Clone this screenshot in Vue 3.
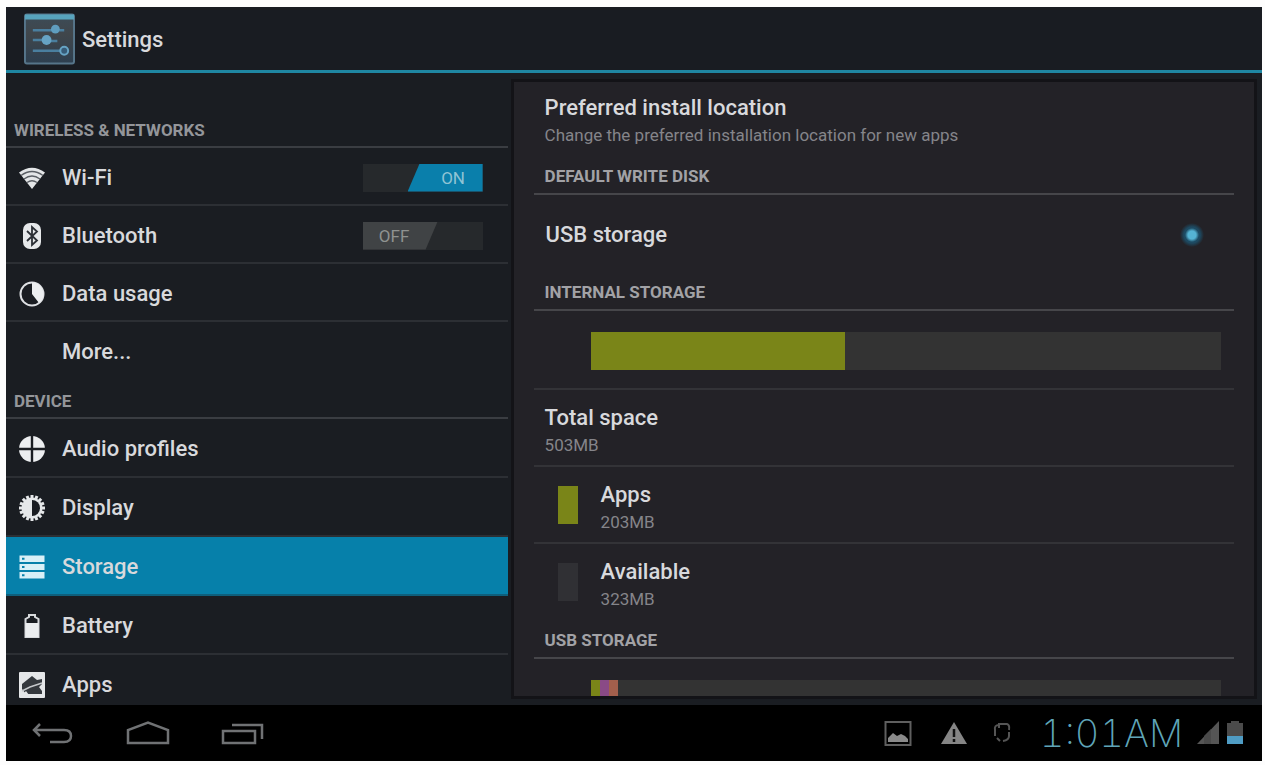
<script setup>
import { ref } from 'vue'

const wifi = ref(true)
const bluetooth = ref(false)
const disk = ref('usb')

const sections = [
  {
    title: 'WIRELESS & NETWORKS',
    id: 'wireless',
    items: [
      { name: 'Wi-Fi', icon: 'wifi', model: wifi },
      { name: 'Bluetooth', icon: 'bluetooth', model: bluetooth },
      { name: 'Data usage', icon: 'data' },
      { name: 'More...', icon: '' }
    ]
  },
  {
    title: 'DEVICE',
    id: 'device',
    items: [
      { name: 'Audio profiles', icon: 'audio' },
      { name: 'Display', icon: 'display' },
      { name: 'Storage', icon: 'storage', active: true },
      { name: 'Battery', icon: 'battery' },
      { name: 'Apps', icon: 'apps' }
    ]
  }
]

const internal = { used: 203, total: 503 }
const teeth = Array.from({ length: 16 }, (_, i) => i * 22.5)
</script>

<template>
  <div class="tablet">
    <header class="bar">
      <svg class="logo" viewBox="0 0 52 52" aria-hidden="true">
        <defs>
          <linearGradient id="tile" x1="0" y1="0" x2="0" y2="1">
            <stop offset="0" stop-color="#3c4c58" />
            <stop offset="0.4" stop-color="#40464b" />
            <stop offset="1" stop-color="#2d3f50" />
          </linearGradient>
        </defs>
        <rect x="1" y="1" width="50" height="50" rx="2" fill="url(#tile)" stroke="#56758a" stroke-width="2" />
        <path d="M1 3.5H51" stroke="#57a3bd" stroke-width="5" />
        <g stroke="#4a7f9f" stroke-width="2.500" fill="none">
          <path d="M9 17H29M9 27H20M27 28H34M9 38H38M36 17H41" />
        </g>
        <circle cx="32" cy="16" r="4.500" fill="#5f9dbe" />
        <circle cx="23" cy="27" r="5" fill="#66a3c4" />
        <circle cx="41" cy="38" r="4" fill="#365b78" stroke="#66a3c4" stroke-width="2" />
      </svg>
      <h1>Settings</h1>
    </header>

    <main class="panes">
      <nav class="side" aria-label="Settings">
        <section v-for="s in sections" :key="s.id" :class="s.id">
          <h2 class="side-head">{{ s.title }}</h2>
          <div v-for="it in s.items" :key="it.name" class="item" :class="{ active: it.active }">
            <a href="#" class="link">
              <svg class="icon" viewBox="0 0 28 28" aria-hidden="true">
                <g v-if="it.icon === 'wifi'">
                  <path d="M1 8.500Q14 -1 27 8.500L14 25Z" fill="#e4e6e8" />
                  <path d="M3 11.500Q14 3.500 25 11.500M6 15Q14 9 22 15M9 18.500Q14 15 19 18.500" fill="none" stroke="#5a5e64" stroke-width="1.300" />
                </g>
                <g v-else-if="it.icon === 'bluetooth'">
                  <rect x="5" y="1" width="18" height="26" rx="7" fill="#e6e8ea" />
                  <path d="M9 9L19 18.500L14 23V5L19 9.500L9 19" fill="none" stroke="#2b2f35" stroke-width="1.800" />
                </g>
                <g v-else-if="it.icon === 'data'">
                  <circle cx="14" cy="14" r="11.500" fill="none" stroke="#dfe1e4" stroke-width="2" />
                  <path d="M14 14V2.500A11.500 11.500 0 0 1 21 23Z" fill="#eceef0" />
                </g>
                <g v-else-if="it.icon === 'audio'">
                  <circle cx="14" cy="14" r="13" fill="#eceef0" />
                  <path d="M14 0V28M0 14H28" stroke="#1a1d22" stroke-width="2.400" />
                </g>
                <g v-else-if="it.icon === 'display'">
                  <rect v-for="t in teeth" :key="t" x="12.500" y="1" width="3" height="5" fill="#e6e8ea" :transform="`rotate(${t} 14 14)`" />
                  <circle cx="14" cy="14" r="10.500" fill="#e6e8ea" />
                  <path d="M14 6A8 8 0 0 1 14 22Z" fill="#1a1d22" />
                </g>
                <g v-else-if="it.icon === 'storage'">
                  <path d="M1.500 2.500H26.500V9H1.500ZM1.500 11H26.500V17H1.500ZM1.500 19H26.500V25.500H1.500Z" fill="#d9f0f7" />
                  <path d="M4 5.700H6.500M4 14H6.500M4 22.300H6.500" stroke="#0680aa" stroke-width="2" />
                </g>
                <g v-else-if="it.icon === 'battery'">
                  <path d="M7.500 25V7L11 5V3H17V5L20.500 7V25Z" fill="none" stroke="#d8dadd" stroke-width="2" />
                  <path d="M7.500 11H20.500V25H7.500Z" fill="#eceef0" />
                </g>
                <g v-else-if="it.icon === 'apps'">
                  <rect x="1" y="1" width="26" height="26" rx="1" fill="#e4e6e8" />
                  <path d="M4 13L9 9L14 5L19 9L24 8V13L21 16L24 20V23H8L4 18Z" fill="#34383d" />
                  <path d="M4 20L12 16L18 14L24 12" stroke="#c5c8cb" stroke-width="1.500" fill="none" />
                  <path d="M4 24L8 20L11 24Z" fill="#e4e6e8" />
                </g>
              </svg>
              <span>{{ it.name }}</span>
            </a>
            <label v-if="it.model" class="switch" :class="{ on: it.model.value }">
              <input v-model="it.model.value" type="checkbox" role="switch" :aria-label="it.name" />
              <span class="thumb">{{ it.model.value ? 'ON' : 'OFF' }}</span>
            </label>
          </div>
        </section>
      </nav>

      <section class="detail" aria-label="Storage">
        <div class="scroll">
          <div class="pref first">
            <h3>Preferred install location</h3>
            <p>Change the preferred installation location for new apps</p>
          </div>
          <h2 class="head">DEFAULT WRITE DISK</h2>
          <label class="disk">
            <span>USB storage</span>
            <input v-model="disk" type="radio" name="disk" value="usb" />
          </label>
          <h2 class="head">INTERNAL STORAGE</h2>
          <div class="usage">
            <div class="meter">
              <i class="apps" :style="{ width: (internal.used / internal.total) * 100 + '%' }"></i>
            </div>
          </div>
          <div class="pref">
            <h3>Total space</h3>
            <p>503MB</p>
          </div>
          <div class="pref keyed">
            <i class="swatch apps"></i>
            <div>
              <h3>Apps</h3>
              <p>203MB</p>
            </div>
          </div>
          <div class="pref keyed last">
            <i class="swatch free"></i>
            <div>
              <h3>Available</h3>
              <p>323MB</p>
            </div>
          </div>
          <h2 class="head">USB STORAGE</h2>
          <div class="usage">
            <div class="meter">
              <i class="apps thin"></i><i class="pictures thin"></i><i class="audio thin"></i>
            </div>
          </div>
        </div>
      </section>
    </main>

    <footer class="system">
      <div class="keys">
        <button type="button" aria-label="Back">
          <svg viewBox="0 0 44 28"><path d="M9 3L3 9L9 15M3 9H33Q40 9 40 15T33 21H19" fill="none" stroke="#707274" stroke-width="2.500" /></svg>
        </button>
        <button type="button" aria-label="Home">
          <svg viewBox="0 0 44 28"><path d="M2 22V9L22 1.500L42 9V22Z" fill="none" stroke="#707274" stroke-width="2.500" /></svg>
        </button>
        <button type="button" aria-label="Recent apps">
          <svg viewBox="0 0 44 28"><path d="M2 10H34V22H2ZM11 4H41V18" fill="none" stroke="#707274" stroke-width="2.500" /></svg>
        </button>
      </div>
      <div class="status">
        <svg class="picture" viewBox="0 0 28 28" aria-hidden="true">
          <rect x="1.500" y="3" width="25" height="23" fill="none" stroke="#5f5f5f" stroke-width="2" />
          <path d="M4 23V19L9 14L13 17L17 15L21 17L24 20V23Z" fill="#8a8a8a" />
        </svg>
        <svg class="warn" viewBox="0 0 28 28" aria-hidden="true">
          <path d="M14 3L27 25H1Z" fill="#858585" />
          <path d="M14 10V18M14 20V23" stroke="#111" stroke-width="2.500" />
        </svg>
        <svg class="sync" viewBox="0 0 20 28" aria-hidden="true">
          <path d="M7 6Q2 6 3 11V17M7 4V9M8 5H15Q18 6 17 11M17 13V17Q17 21 11 22M5 19L8 22" fill="none" stroke="#555" stroke-width="2" />
        </svg>
        <time>1:01AM</time>
        <svg class="signal" viewBox="0 0 24 28" aria-hidden="true">
          <path d="M23 2V25H1Z" fill="#555" />
          <path d="M15 10V25H8V17Z" fill="#4a4a4a" />
        </svg>
        <svg class="cell" viewBox="0 0 18 28" aria-hidden="true">
          <path d="M1 4H5V2H13V4H17V25H1Z" fill="#4b4b4b" />
          <path d="M1 17H17V25H1Z" fill="#4f9cc4" />
        </svg>
      </div>
    </footer>
  </div>
</template>

<style>
body {
  background: #fdfdfd;
}
</style>

<style scoped>
* {
  box-sizing: border-box;
  margin: 0;
}

.tablet {
  height: 100vh;
  padding: 7px 3px 4px 6px;
  display: grid;
  grid-template-rows: auto minmax(0, 1fr) auto;
  font-family: Roboto, "Liberation Sans", sans-serif;
  color: #d8d9dc;
}

.bar {
  display: flex;
  align-items: center;
  gap: 7px;
  padding: 6px 18px 5px;
  background: #191c22;
  border-bottom: 3px solid #1f87a3;
}

.logo {
  width: 51px;
  height: 52px;
}

h1,
h3,
.link,
.disk {
  font-size: 22px;
  line-height: 28px;
  font-weight: 500;
}

h1 {
  padding-top: 2px;
}

.panes {
  display: grid;
  grid-template-columns: 502fr 755fr;
  background: #1a1d22;
}

.side {
  overflow: hidden;
}

.side-head {
  display: flex;
  align-items: flex-end;
  height: 39px;
  padding: 0 8px 6px;
  border-bottom: 2px solid #3a3d42;
  font-size: 17px;
  line-height: 20px;
  font-weight: 700;
  color: #94969a;
}

.wireless .side-head {
  height: 75px;
}

.item {
  display: flex;
  align-items: center;
  height: 58px;
  padding: 3px 25px 0 0;
  border-bottom: 2px solid #2c2f34;
}

.device .item {
  height: 59px;
}

.item:last-child {
  border-bottom-color: transparent;
}

.item.active {
  background: #0680aa;
  border-bottom-color: #0e5f7c;
}

.link {
  flex: 1;
  display: flex;
  align-items: center;
  gap: 16px;
  padding-left: 12px;
  color: inherit;
  text-decoration: none;
}

.icon {
  width: 28px;
  height: 28px;
}

.switch {
  position: relative;
  display: flex;
  width: 120px;
  height: 28px;
  background: #26292c;
  font-size: 17px;
  line-height: 29px;
}

.switch input {
  position: absolute;
  inset: 0;
  width: 100%;
  height: 100%;
  margin: 0;
  opacity: 0;
}

.thumb {
  width: 75px;
  padding-right: 12px;
  text-align: center;
  background: #404345;
  color: #8f9290;
  clip-path: polygon(0 0, 100% 0, 84% 100%, 0 100%);
}

.switch.on {
  justify-content: flex-end;
}

.switch.on .thumb {
  padding: 0 0 0 16px;
  background: #0a7fab;
  color: #8fc3d4;
  clip-path: polygon(16% 0, 100% 0, 100% 100%, 0 100%);
}

.detail {
  margin: 6px 5px 6px 3px;
  padding: 0 20px;
  border: 3px solid #131317;
  background: #232227;
  overflow: hidden;
}

.pref {
  height: 77px;
  padding: 14px 11px 0;
  border-bottom: 2px solid #333337;
}

.pref p {
  font-size: 17px;
  line-height: 26px;
  color: #85858a;
}

.pref.first,
.pref.last {
  border-bottom-color: transparent;
}

.pref.first {
  height: 75px;
  padding-top: 12px;
}

.head {
  height: 38px;
  padding: 7px 11px 0;
  border-bottom: 2px solid #46464a;
  font-size: 17px;
  line-height: 24px;
  font-weight: 700;
  color: #a2a2a6;
}

.disk {
  display: flex;
  align-items: center;
  justify-content: space-between;
  height: 78px;
  padding: 2px 30px 0 12px;
}

.disk input {
  appearance: none;
  width: 24px;
  height: 24px;
  margin: 0;
  border-radius: 50%;
  background: radial-gradient(circle, #55b4d4 0 4px, #1d4a62 7px 8px, #232227 12px);
}

.usage {
  height: 79px;
  padding: 21px 13px 0 57px;
  border-bottom: 2px solid #333337;
}

.meter {
  display: flex;
  height: 38px;
  background: #333333;
}

.apps {
  background: #7a8518;
}

.thin {
  width: 9px;
}

.pictures {
  background: #8a4a86;
}

.audio {
  background: #a35f4c;
}

.keyed {
  display: flex;
  gap: 23px;
  padding-left: 24px;
}

.swatch {
  width: 20px;
  height: 38px;
  margin-top: 5px;
}

.free {
  background: #303034;
}

.system {
  display: flex;
  align-items: center;
  justify-content: space-between;
  height: 56px;
  padding: 0 18px 0 25px;
  background: #000;
}

.keys,
.status {
  display: flex;
  align-items: center;
}

.keys {
  gap: 51px;
}

.keys button {
  display: block;
  padding: 4px 0 0;
  border: 0;
  background: none;
}

.keys svg {
  display: block;
  width: 44px;
  height: 28px;
}

.status svg {
  height: 28px;
}

.picture,
.warn {
  width: 28px;
  margin-right: 28px;
}

.warn {
  margin-right: 24px;
}

.sync {
  width: 20px;
  margin-right: 28px;
}

time {
  margin-right: 13px;
  font-family: Inter, Roboto, sans-serif;
  font-size: 38px;
  line-height: 40px;
  font-weight: 200;
  font-variant-numeric: tabular-nums;
  color: #5fa5b8;
}

.signal {
  width: 24px;
  margin-right: 6px;
}

.cell {
  width: 18px;
}
</style>
